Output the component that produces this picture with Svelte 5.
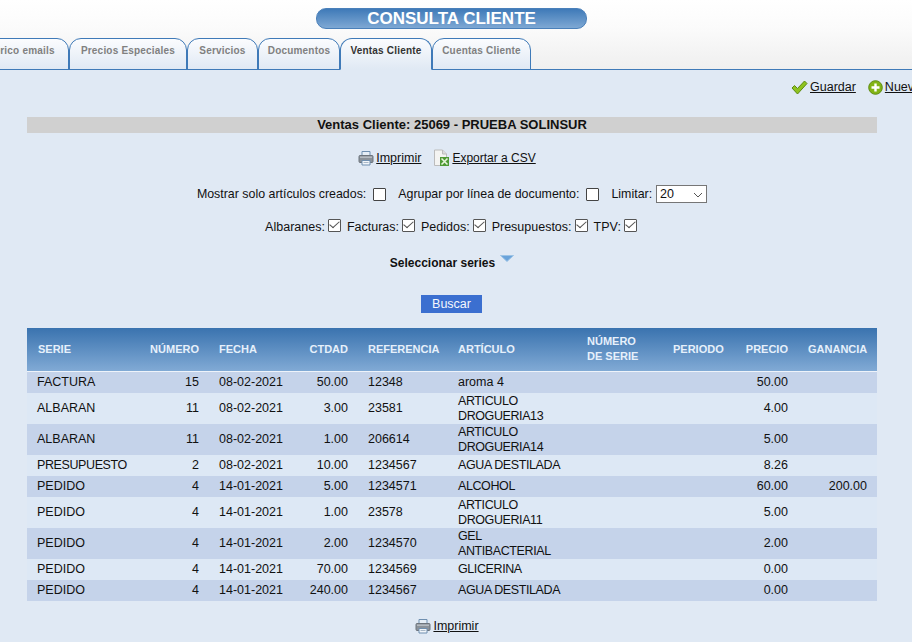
<script>
  const tabs = [
    { label: 'Histórico emails', width: 109 },
    { label: 'Precios Especiales', width: 118 },
    { label: 'Servicios', width: 71 },
    { label: 'Documentos', width: 82 },
    { label: 'Ventas Cliente', width: 92 },
    { label: 'Cuentas Cliente', width: 99 }
  ];
  const types = ['Albaranes', 'Facturas', 'Pedidos', 'Presupuestos', 'TPV'];
  const rows = [
    ['FACTURA', '15', '08-02-2021', '50.00', '12348', 'aroma 4', '50.00', ''],
    ['ALBARAN', '11', '08-02-2021', '3.00', '23581', 'ARTICULO DROGUERIA13', '4.00', ''],
    ['ALBARAN', '11', '08-02-2021', '1.00', '206614', 'ARTICULO DROGUERIA14', '5.00', ''],
    ['PRESUPUESTO', '2', '08-02-2021', '10.00', '1234567', 'AGUA DESTILADA', '8.26', ''],
    ['PEDIDO', '4', '14-01-2021', '5.00', '1234571', 'ALCOHOL', '60.00', '200.00'],
    ['PEDIDO', '4', '14-01-2021', '1.00', '23578', 'ARTICULO DROGUERIA11', '5.00', ''],
    ['PEDIDO', '4', '14-01-2021', '2.00', '1234570', 'GEL ANTIBACTERIAL', '2.00', ''],
    ['PEDIDO', '4', '14-01-2021', '70.00', '1234569', 'GLICERINA', '0.00', ''],
    ['PEDIDO', '4', '14-01-2021', '240.00', '1234567', 'AGUA DESTILADA', '0.00', '']
  ];
</script>

{#snippet printer()}
  <svg class="ico" width="16" height="16" viewBox="0 0 16 16">
    <path d="M4 1.500h8v5H4z" fill="#e6eef6" stroke="#6f8fb0" />
    <path d="M1 6.500q0-1 1-1h12q1 0 1 1v5q0 1-1 1H2q-1 0-1-1z" fill="#8b929a" stroke="#6d747c" />
    <path d="M2 6.500h12v1.500H2z" fill="#b4bac0" />
    <path d="M4 10.500h8v4.500H4z" fill="#f2f6fa" stroke="#6f8fb0" />
    <path d="M5.500 12.500h5" stroke="#a9b8c8" />
  </svg>
{/snippet}

<div class="page">
  <header class="top">
    <h1 class="title">CONSULTA CLIENTE</h1>
    <nav class="tabs">
      {#each tabs as t}
        <span class="tab" class:active={t.label === 'Ventas Cliente'} style:width="{t.width}px">{t.label}</span>
      {/each}
    </nav>
  </header>

  <div class="actions">
    <a class="link" href="#g">
      <svg class="ico" width="17" height="15" viewBox="0 0 17 15">
        <path d="M1 8l2.500-2.500 3 3L13.500 1 16 3.500 6.500 14z" fill="#8fc31f" stroke="#5d8a12" stroke-linejoin="round" />
      </svg>
      Guardar
    </a>
    <a class="link nuevo" href="#n">
      <svg class="ico" width="15" height="15" viewBox="0 0 15 15">
        <circle cx="7.500" cy="7.500" r="6.800" fill="#82b414" stroke="#5f8c12" />
        <path d="M7.500 3.500v8M3.500 7.500h8" stroke="#fff" stroke-width="2.400" />
      </svg>
      Nuevo
    </a>
  </div>

  <h2 class="band">Ventas Cliente: 25069 - PRUEBA SOLINSUR</h2>

  <div class="line prints">
    <a class="link" href="#p">{@render printer()}Imprimir</a>
    <a class="link csv" href="#c">
      <svg class="ico" width="17" height="18" viewBox="0 0 17 18">
        <path d="M1.500 1h8l4 4v11.500h-12z" fill="#f4f4f2" stroke="#bcbcbc" />
        <path d="M9.500 1v4h4" fill="#dcdcdc" stroke="#bcbcbc" />
        <path d="M7 8h9v9H7z" fill="#4f9a35" />
        <path d="M8.500 9.500l6 6M14.500 9.500l-6 6" stroke="#e8f5dc" stroke-width="1.600" />
      </svg>Exportar a CSV
    </a>
  </div>

  <div class="line filters">
    <label>Mostrar solo artículos creados:<input type="checkbox" class="box" /></label>
    <label>Agrupar por línea de documento:<input type="checkbox" class="box" /></label>
    <label>Limitar:
      <span class="limit-wrap">
        <select class="limit"><option>20</option></select>
        <svg class="chev" width="10" height="6" viewBox="0 0 10 6">
          <path d="M1 1l4 4 4-4" fill="none" stroke="#555" />
        </svg>
      </span>
    </label>
  </div>

  <div class="line types">
    {#each types as t}
      <label>{t}:<input type="checkbox" class="box small" checked /></label>
    {/each}
  </div>

  <div class="line series">
    <strong>Seleccionar series</strong>
    <svg class="tri" width="14" height="7" viewBox="0 0 14 7">
      <path d="M0.500 0.500h13L7 6.500z" fill="#6aa3da" stroke="#9cc3e6" />
    </svg>
  </div>

  <div class="line search"><button class="btn">Buscar</button></div>

  <table class="grid">
    <colgroup>
      <col style="width:112px" /><col style="width:70px" /><col style="width:90px" /><col style="width:59px" />
      <col style="width:90px" /><col style="width:129px" /><col style="width:86px" /><col style="width:72px" />
      <col style="width:63px" /><col style="width:79px" />
    </colgroup>
    <thead>
      <tr>
        <th class="first">SERIE</th><th class="r">NÚMERO</th><th>FECHA</th><th class="r">CTDAD</th><th>REFERENCIA</th>
        <th>ARTÍCULO</th><th>NÚMERO<br />DE SERIE</th><th>PERIODO</th><th class="r">PRECIO</th><th>GANANCIA</th>
      </tr>
    </thead>
    <tbody>
      {#each rows as r}
        <tr>
          <td class:tight={r[0] === 'PRESUPUESTO'}>{r[0]}</td><td class="r">{r[1]}</td><td>{r[2]}</td><td class="r">{r[3]}</td><td>{r[4]}</td>
          <td class:tight={r[5] === r[5].toUpperCase()}>{r[5]}</td><td></td><td></td><td class="r">{r[6]}</td><td class="r">{r[7]}</td>
        </tr>
      {/each}
    </tbody>
  </table>

  <div class="line foot">
    <a class="link" href="#p">{@render printer()}Imprimir</a>
  </div>
</div>

<style>
  :global(body) {
    margin: 0;
    background: #e0e9f4;
  }
  .page {
    width: 912px;
    height: 642px;
    overflow: hidden;
    background: #e0e9f4;
    color: #111;
    font: 12.5px/15px "Liberation Sans", Arial, sans-serif;
  }
  .top {
    height: 69px;
    display: flex;
    flex-direction: column;
    background: linear-gradient(#ffffff, #fbfbfb 40%, #efefef);
    border-bottom: 1px solid #3f7ab8;
  }
  .title {
    margin: 8px 0 0 316px;
    width: 271px;
    height: 21px;
    box-sizing: border-box;
    border: 1px solid #4a80ba;
    border-radius: 10px;
    background: linear-gradient(#3f7ab8, #7ea8d4);
    color: #fff;
    font-size: 17px;
    line-height: 19px;
    font-weight: bold;
    text-align: center;
  }
  .tabs {
    display: flex;
    margin: 9px 0 -1px -40px;
    height: 32px;
  }
  .tab {
    flex: none;
    box-sizing: border-box;
    height: 32px;
    line-height: 24px;
    border: 1px solid #3f7ab8;
    border-radius: 12px 12px 0 0;
    background: linear-gradient(#fbfcfe, #e0e9f4);
    color: #808080;
    font-size: 10px;
    font-weight: bold;
    letter-spacing: 0.2px;
    text-align: center;
    white-space: nowrap;
  }
  .tab.active {
    color: #333;
    border-bottom-color: #e0e9f4;
  }
  .actions {
    display: flex;
    padding: 4px 0 0 791px;
    height: 38px;
    box-sizing: border-box;
    white-space: nowrap;
  }
  .link {
    color: #111;
    text-decoration: underline;
    display: inline-flex;
    align-items: center;
    white-space: nowrap;
    align-self: flex-start;
    height: 26px;
  }
  .line .link {
    align-self: center;
    height: auto;
  }
  .nuevo {
    margin-left: 12px;
  }
  .csv {
    font-size: 12px;
  }
  .ico {
    flex: none;
    margin-right: 2px;
  }
  .band {
    margin: 9px 35px 0 27px;
    height: 16px;
    background: #d0d0d0;
    font-size: 13px;
    line-height: 16px;
    font-weight: bold;
    text-align: center;
  }
  .line {
    display: flex;
    justify-content: center;
    align-items: center;
    width: 850px;
    margin-left: 27px;
    box-sizing: border-box;
  }
  .prints {
    margin-top: 16px;
    height: 18px;
    gap: 12px;
    padding-right: 10px;
  }
  .filters {
    margin-top: 18px;
    height: 18px;
    gap: 12px;
    font-size: 12.4px;
  }
  .filters label,
  .types label {
    display: inline-flex;
    align-items: center;
  }
  .box {
    appearance: none;
    box-sizing: border-box;
    width: 13px;
    height: 13px;
    margin: 0 0 0 7px;
    border: 1px solid #444;
    border-radius: 1px;
    background: #fff;
  }
  .small {
    margin: -3px 0 0 3px;
    position: relative;
    border-color: #555;
  }
  .small:checked::after {
    content: "";
    position: absolute;
    left: 3px;
    top: -1px;
    width: 4px;
    height: 8px;
    border: solid #555;
    border-width: 0 1.500px 1.500px 0;
    transform: rotate(40deg) skewX(-8deg);
  }
  .limit-wrap {
    position: relative;
    display: inline-flex;
    margin-left: 4px;
  }
  .limit {
    appearance: none;
    box-sizing: border-box;
    width: 51px;
    height: 18px;
    padding: 0 0 0 3px;
    border: 1px solid #767676;
    background: #fff;
    font: 12.500px "Liberation Sans", Arial, sans-serif;
    color: #111;
    border-radius: 0;
  }
  .chev {
    position: absolute;
    right: 4px;
    top: 7px;
    pointer-events: none;
  }
  .types {
    margin-top: 15px;
    height: 18px;
    gap: 6px;
    padding-right: 2px;
  }
  .series {
    margin-top: 18px;
    height: 18px;
    gap: 5px;
    font-size: 12px;
  }
  .tri {
    margin-top: -10px;
  }
  .search {
    margin-top: 23px;
    height: 18px;
    padding-right: 1px;
  }
  .btn {
    width: 61px;
    height: 18px;
    padding: 0;
    border: 0;
    background: #3b6fd0;
    color: #f4f7fd;
    font: 12.500px/18px "Liberation Sans", Arial, sans-serif;
  }
  .grid {
    margin: 15px 0 0 27px;
    width: 850px;
    table-layout: fixed;
    border-collapse: collapse;
  }
  th {
    height: 43px;
    padding: 0 10px;
    box-sizing: border-box;
    background: linear-gradient(#3a73af, #81aad5);
    border-bottom: 1px solid #eef3fa;
    color: #e6f0fb;
    font-size: 11px;
    line-height: 15px;
    font-weight: bold;
    text-align: left;
    white-space: nowrap;
  }
  th.first {
    padding-left: 11px;
  }
  td {
    height: 21px;
    padding: 1px 10px;
    box-sizing: border-box;
    line-height: 14.500px;
    vertical-align: middle;
  }
  td.tight {
    letter-spacing: -0.4px;
  }
  tbody tr:first-child td {
    height: 22px;
  }
  th.r,
  td.r {
    text-align: right;
  }
  tbody tr:nth-child(odd) {
    background: #c5d3ea;
  }
  tbody tr:nth-child(even) {
    background: #dde8f5;
  }
  .foot {
    margin-top: 16px;
    height: 18px;
    padding-right: 10px;
  }
</style>
